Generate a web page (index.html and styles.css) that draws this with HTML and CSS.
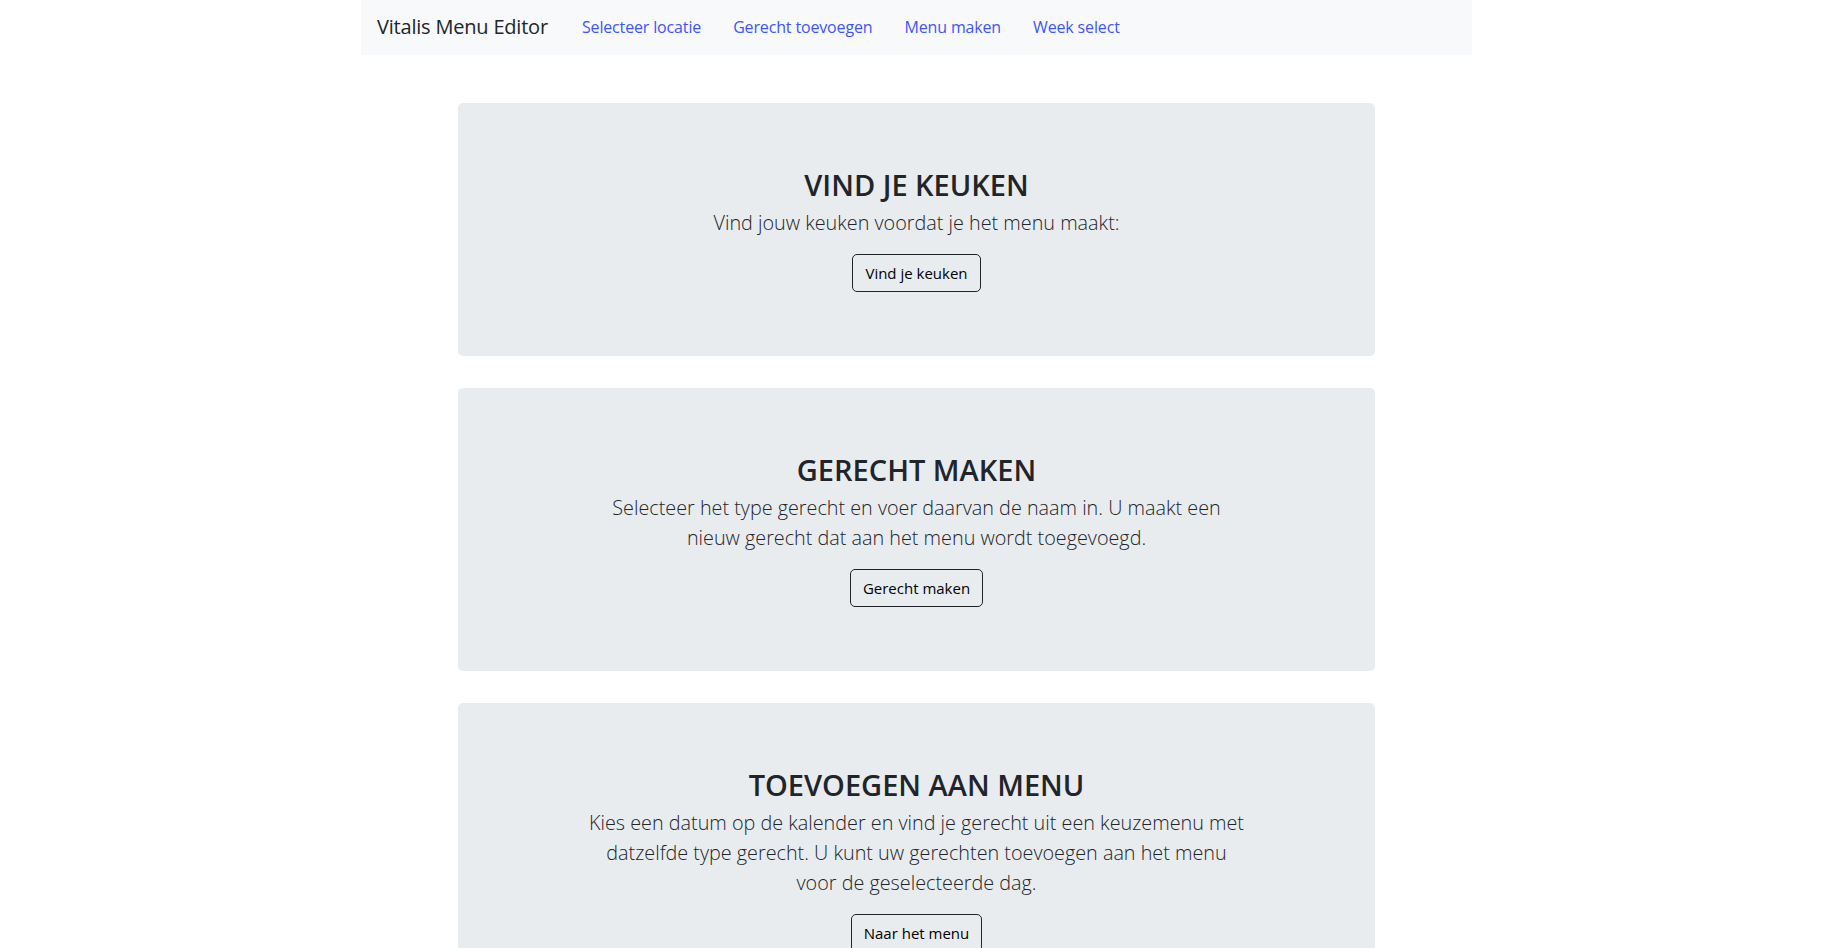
FILE: index.html
```html
<!DOCTYPE html>
<html lang="nl">
<head>
<meta charset="utf-8">
<title>Vitalis Menu Editor</title>
<link rel="stylesheet" href="styles.css">
</head>
<body>
<div class="container">
  <nav class="navbar">
    <span class="brand">Vitalis Menu Editor</span>
    <ul class="nav">
      <li><a href="#">Selecteer locatie</a></li>
      <li><a href="#">Gerecht toevoegen</a></li>
      <li><a href="#">Menu maken</a></li>
      <li><a href="#">Week select</a></li>
    </ul>
  </nav>
  <main class="cards">
    <section class="card">
      <h2>VIND JE KEUKEN</h2>
      <p class="lead">Vind jouw keuken voordat je het menu maakt:</p>
      <a class="btn" href="#">Vind je keuken</a>
    </section>
    <section class="card">
      <h2>GERECHT MAKEN</h2>
      <p class="lead">Selecteer het type gerecht en voer daarvan de naam in. U maakt een<br>nieuw gerecht dat aan het menu wordt toegevoegd.</p>
      <a class="btn" href="#">Gerecht maken</a>
    </section>
    <section class="card">
      <h2>TOEVOEGEN AAN MENU</h2>
      <p class="lead">Kies een datum op de kalender en vind je gerecht uit een keuzemenu met<br>datzelfde type gerecht. U kunt uw gerechten toevoegen aan het menu<br>voor de geselecteerde dag.</p>
      <a class="btn" href="#">Naar het menu</a>
    </section>
  </main>
</div>
</body>
</html>
```
FILE: styles.css
```css
* { box-sizing: border-box; }
html, body { margin: 0; padding: 0; background: #fff; }
body {
  font-family: "Open Sans", "Noto Sans", sans-serif;
  color: #212529;
  font-size: 16px;
}
.container {
  width: 1111px;
  margin: 0 auto;
}
.navbar {
  display: flex;
  align-items: center;
  height: 55px;
  background: #f8f9fa;
  padding: 0 16px 2px;
}
.brand {
  font-size: 20px;
  color: #212529;
  margin-right: 16px;
  letter-spacing: -0.2px;
}
.nav {
  display: flex;
  list-style: none;
  margin: 0;
  padding: 0;
}
.nav a {
  display: block;
  padding: 0 16px;
  font-size: 16px;
  color: #3f55f6;
  text-decoration: none;
  letter-spacing: -0.15px;
}
.nav li:first-child a { padding-left: 18px; }
.cards {
  display: flex;
  flex-direction: column;
  gap: 32px;
  width: 917px;
  margin: 48px auto 0;
}
.card {
  background: #e9ecef;
  border-radius: 5px;
  padding: 63px 24px 64px;
  text-align: center;
}
.card h2 {
  margin: 0 0 4px;
  font-size: 29px;
  line-height: 38px;
  font-weight: 600;
  color: #212529;
}
.lead {
  margin: 0 0 16px;
  font-size: 19.8px;
  line-height: 30px;
  font-weight: 300;
  color: #212529;
}
.btn {
  display: inline-block;
  height: 38px;
  line-height: 24px;
  padding: 6px 12px;
  border: 1px solid #212529;
  border-radius: 5px;
  color: #000;
  font-size: 15px;
  text-decoration: none;
}
```
